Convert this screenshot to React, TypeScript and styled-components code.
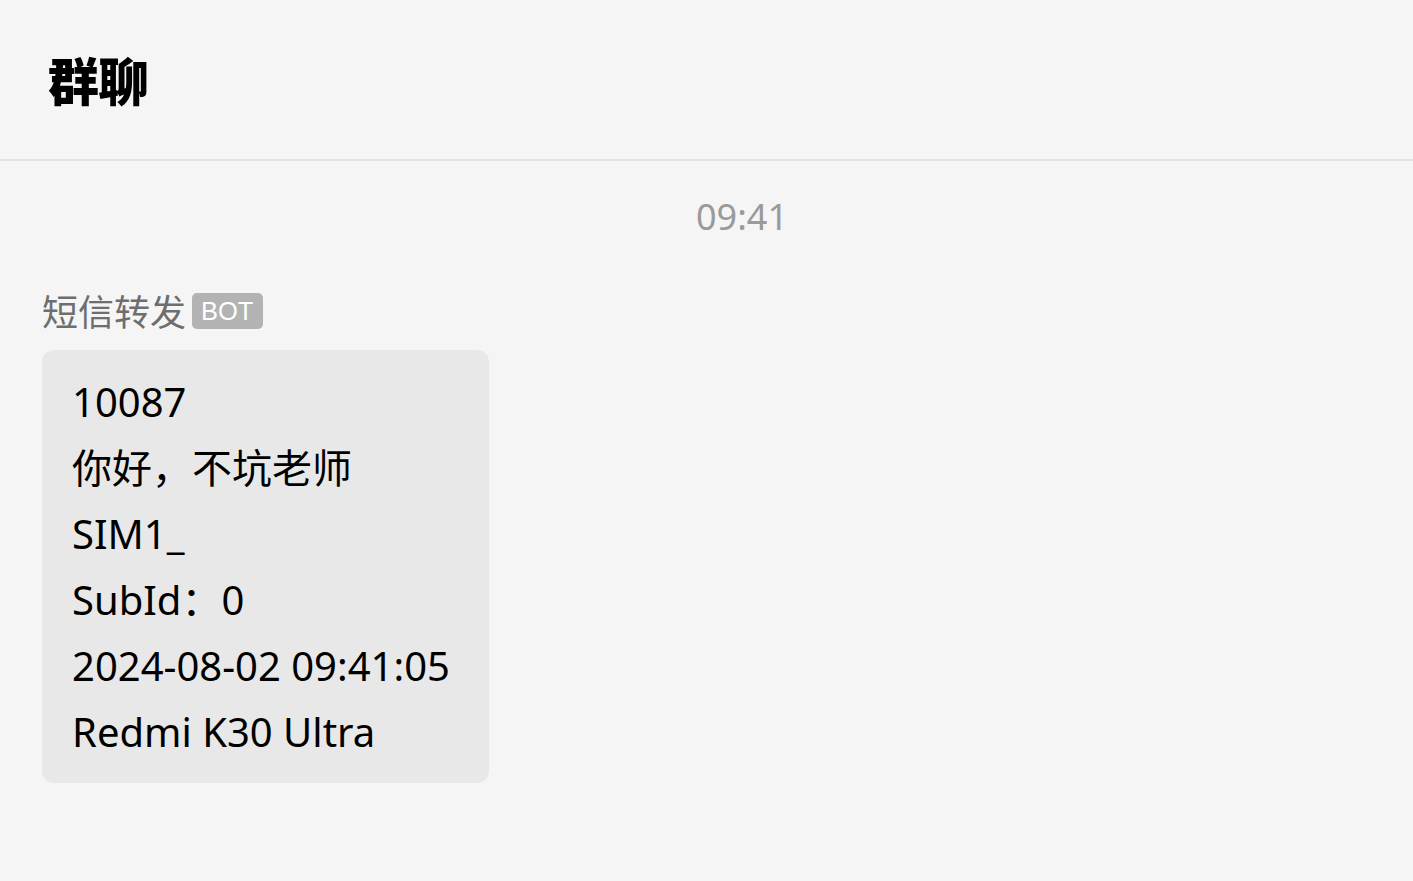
import React from "react";
import styled, { createGlobalStyle } from "styled-components";

const Global = createGlobalStyle`
  html, body { margin: 0; padding: 0; background: #f5f5f5; }
  body { font-family: "Noto Sans", "Noto Sans CJK SC", sans-serif; color: #000; }
`;

const Page = styled.div`
  min-height: 881px;
  background: #f5f5f5;
  display: flex;
  flex-direction: column;
`;

const Header = styled.header`
  height: 159px;
  border-bottom: 2px solid #e3e3e3;
  display: flex;
  align-items: center;
  padding-left: 48px;
  box-sizing: content-box;
`;

const Title = styled.h1`
  margin: 0;
  font-family: "Noto Sans CJK SC", sans-serif;
  font-size: 51px;
  font-weight: 900;
  line-height: 1;
  letter-spacing: -1px;
`;

const ChatArea = styled.main`
  display: flex;
  flex-direction: column;
  padding: 0 42px;
`;

const TimeStamp = styled.div`
  text-align: center;
  padding-left: 71px;
  margin-top: 36px;
  font-size: 36px;
  line-height: 40px;
  color: #9a9a9a;
`;

const Sender = styled.div`
  display: flex;
  align-items: center;
  gap: 6px;
  margin-top: 53px;
  height: 40px;
`;

const SenderName = styled.span`
  font-family: "Noto Sans CJK SC", sans-serif;
  font-size: 36px;
  line-height: 40px;
  color: #6e6e6e;
`;

const Badge = styled.span`
  background: #b3b3b3;
  color: #fff;
  font-family: "Liberation Sans", Arial, sans-serif;
  font-size: 25.5px;
  line-height: 36px;
  height: 36px;
  padding: 0 10px 0 9px;
  border-radius: 5px;
  margin-top: 2px;
`;

const Bubble = styled.div`
  align-self: flex-start;
  margin-top: 20px;
  background: #e8e8e8;
  border-radius: 12px;
  padding: 19px 33px 18px 30px;
  width: 384px;
`;

const Line = styled.div`
  font-size: 40px;
  line-height: 66px;
  white-space: nowrap;
`;

const lines = [
  "10087",
  "你好，不坑老师",
  "SIM1_",
  "SubId：0",
  "2024-08-02 09:41:05",
  "Redmi K30 Ultra",
];

export default function App() {
  return (
    <Page>
      <Global />
      <Header>
        <Title>群聊</Title>
      </Header>
      <ChatArea>
        <TimeStamp>09:41</TimeStamp>
        <Sender>
          <SenderName>短信转发</SenderName>
          <Badge>BOT</Badge>
        </Sender>
        <Bubble>
          {lines.map((l) => (
            <Line key={l}>{l}</Line>
          ))}
        </Bubble>
      </ChatArea>
    </Page>
  );
}
